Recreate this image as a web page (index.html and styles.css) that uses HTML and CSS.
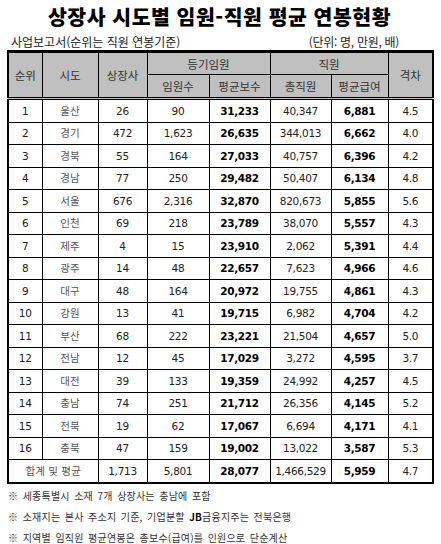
FILE: index.html
```html
<!DOCTYPE html>
<html lang="ko">
<head>
<meta charset="utf-8">
<link rel="stylesheet" href="styles.css">
</head>
<body>
<div class="page">
  <h1 class="title">상장사 시도별 임원-직원 평균 연봉현황</h1>
  <div class="subbar">
    <span class="src">사업보고서(순위는 직원 연봉기준)</span>
    <span class="unit">(단위: 명, 만원, 배)</span>
  </div>
  <table class="tbl">
    <colgroup>
      <col class="c1"><col class="c2"><col class="c3"><col class="c4"><col class="c5"><col class="c6"><col class="c7"><col class="c8">
    </colgroup>
    <thead>
      <tr class="h1">
        <th rowspan="2">순위</th>
        <th rowspan="2">시도</th>
        <th rowspan="2">상장사</th>
        <th colspan="2">등기임원</th>
        <th colspan="2">직원</th>
        <th rowspan="2">격차</th>
      </tr>
      <tr class="h2">
        <th>임원수</th>
        <th>평균보수</th>
        <th>총직원</th>
        <th>평균급여</th>
      </tr>
    </thead>
    <tbody>
      <tr><td>1</td><td class="ko">울산</td><td>26</td><td>90</td><td class="b">31,233</td><td>40,347</td><td class="b">6,881</td><td>4.5</td></tr>
      <tr><td>2</td><td class="ko">경기</td><td>472</td><td>1,623</td><td class="b">26,635</td><td>344,013</td><td class="b">6,662</td><td>4.0</td></tr>
      <tr><td>3</td><td class="ko">경북</td><td>55</td><td>164</td><td class="b">27,033</td><td>40,757</td><td class="b">6,396</td><td>4.2</td></tr>
      <tr><td>4</td><td class="ko">경남</td><td>77</td><td>250</td><td class="b">29,482</td><td>50,407</td><td class="b">6,134</td><td>4.8</td></tr>
      <tr><td>5</td><td class="ko">서울</td><td>676</td><td>2,316</td><td class="b">32,870</td><td>820,673</td><td class="b">5,855</td><td>5.6</td></tr>
      <tr><td>6</td><td class="ko">인천</td><td>69</td><td>218</td><td class="b">23,789</td><td>38,070</td><td class="b">5,557</td><td>4.3</td></tr>
      <tr><td>7</td><td class="ko">제주</td><td>4</td><td>15</td><td class="b">23,910</td><td>2,062</td><td class="b">5,391</td><td>4.4</td></tr>
      <tr><td>8</td><td class="ko">광주</td><td>14</td><td>48</td><td class="b">22,657</td><td>7,623</td><td class="b">4,966</td><td>4.6</td></tr>
      <tr><td>9</td><td class="ko">대구</td><td>48</td><td>164</td><td class="b">20,972</td><td>19,755</td><td class="b">4,861</td><td>4.3</td></tr>
      <tr><td>10</td><td class="ko">강원</td><td>13</td><td>41</td><td class="b">19,715</td><td>6,982</td><td class="b">4,704</td><td>4.2</td></tr>
      <tr><td>11</td><td class="ko">부산</td><td>68</td><td>222</td><td class="b">23,221</td><td>21,504</td><td class="b">4,657</td><td>5.0</td></tr>
      <tr><td>12</td><td class="ko">전남</td><td>12</td><td>45</td><td class="b">17,029</td><td>3,272</td><td class="b">4,595</td><td>3.7</td></tr>
      <tr><td>13</td><td class="ko">대전</td><td>39</td><td>133</td><td class="b">19,359</td><td>24,992</td><td class="b">4,257</td><td>4.5</td></tr>
      <tr><td>14</td><td class="ko">충남</td><td>74</td><td>251</td><td class="b">21,712</td><td>26,356</td><td class="b">4,145</td><td>5.2</td></tr>
      <tr><td>15</td><td class="ko">전북</td><td>19</td><td>62</td><td class="b">17,067</td><td>6,694</td><td class="b">4,171</td><td>4.1</td></tr>
      <tr><td>16</td><td class="ko">충북</td><td>47</td><td>159</td><td class="b">19,002</td><td>13,022</td><td class="b">3,587</td><td>5.3</td></tr>
      <tr class="total"><td colspan="2" class="ko">합계 및 평균</td><td>1,713</td><td>5,801</td><td class="b">28,077</td><td>1,466,529</td><td class="b">5,959</td><td>4.7</td></tr>
    </tbody>
  </table>
  <ul class="notes">
    <li>※ 세종특별시 소재 7개 상장사는 충남에 포함</li>
    <li>※ 소재지는 본사 주소지 기준, 기업분할 <b>JB</b>금융지주는 전북은행</li>
    <li>※ 지역별 임직원 평균연봉은 총보수(급여)를 인원으로 단순계산</li>
  </ul>
</div>
</body>
</html>
```
FILE: styles.css
```css
html, body {
  margin: 0;
  padding: 0;
  background: #ffffff;
}
body {
  font-family: "Noto Sans CJK KR", "Noto Sans", sans-serif;
  color: #111;
}
.page {
  width: 425px;
  padding-left: 7px;
}
.title {
  margin: 0;
  height: 33px;
  padding-top: 1px;
  box-sizing: border-box;
  text-align: center;
  font-size: 20.5px;
  line-height: 30px;
  font-weight: 900;
  letter-spacing: 0.5px;
  color: #000;
}
.subbar {
  display: flex;
  justify-content: space-between;
  align-items: center;
  height: 17px;
  padding-left: 4px;
  padding-right: 33px;
  color: #222;
}
.src {
  font-size: 12px;
  line-height: 14px;
}
.unit {
  font-size: 12px;
  line-height: 14px;
  letter-spacing: -0.3px;
}
.tbl {
  width: 425px;
  border-collapse: collapse;
  table-layout: fixed;
  border-top: 3px solid #000;
  border-left: 2px solid #000;
  border-right: 2px solid #000;
  border-bottom: 2px solid #000;
  font-family: "DejaVu Sans", "Noto Sans CJK KR", sans-serif;
  font-size: 10.5px;
}
.c1 { width: 34px; }
.c2 { width: 56px; }
.c3 { width: 49px; }
.c4 { width: 62px; }
.c5 { width: 61px; }
.c6 { width: 61px; }
.c7 { width: 57px; }
.c8 { width: 45px; }
.tbl th {
  background: #c0c0c0;
  font-family: "Noto Sans CJK KR", sans-serif;
  font-weight: 400;
  font-size: 11.5px;
  line-height: 14px;
  color: #333;
  border: 1px solid #000;
  padding: 0;
  height: 21px;
}
.tbl thead tr.h2 th {
  height: 22px;
  border-bottom: 3px double #000;
}
.tbl thead tr.h1 th[rowspan] {
  border-bottom: 3px double #000;
}
.tbl td {
  border: 1px solid #000;
  text-align: center;
  padding: 0;
  height: 21.5px;
  line-height: 14px;
  color: #222;
  letter-spacing: -0.3px;
}
.tbl td.ko {
  font-family: "Noto Sans CJK KR", sans-serif;
  font-size: 10.5px;
  color: #555;
  letter-spacing: 0.2px;
}
.tbl td.b {
  font-weight: 700;
  color: #000;
}
.notes {
  list-style: none;
  margin: 0;
  padding: 1px 0 0 1px;
  font-size: 10px;
  color: #333;
  letter-spacing: 0.2px;
  word-spacing: 1.5px;
}
.notes li {
  height: 21px;
  line-height: 21px;
}
.notes b {
  font-weight: 700;
  color: #000;
}
```
